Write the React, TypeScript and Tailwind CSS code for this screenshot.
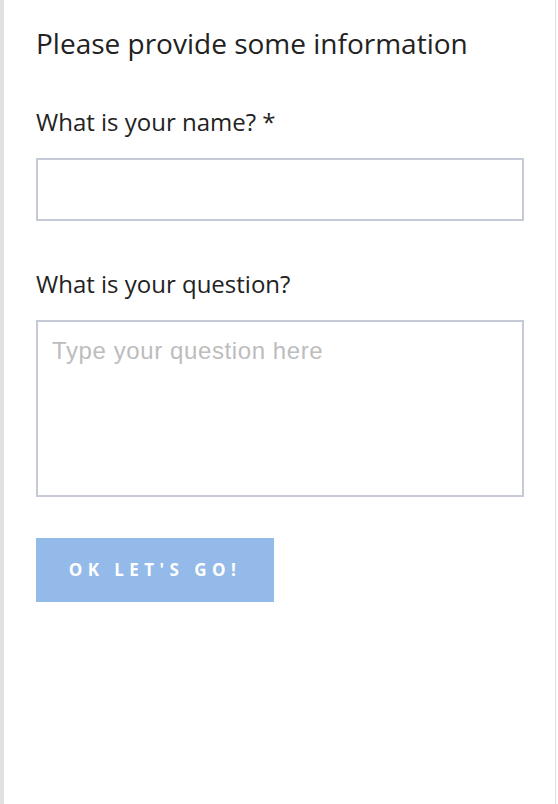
import React from "react";

export default function App() {
  return (
    <div className="flex min-h-[804px] w-[558px] bg-white">
      <div className="w-1 shrink-0 bg-[#e1e1e1]" />
      <div className="flex-1 pl-8 pr-[30px] pt-[23px]" style={{ fontFamily: '"Open Sans", sans-serif' }}>
        <h1 className="text-[28px] leading-[40px] text-[#222]">Please provide some information</h1>
        <label className="mt-[42px] block text-[24px] leading-[34px] text-[#222]">What is your name? *</label>
        <input
          type="text"
          className="mt-[19px] block h-[63px] w-[488px] border-2 border-[#c5cad6] bg-white outline-none"
        />
        <label className="mt-[46px] block text-[24px] leading-[34px] text-[#222]">What is your question?</label>
        <textarea
          placeholder="Type your question here"
          className="mt-[19px] block h-[177px] w-[488px] resize-none border-2 border-[#c5cad6] bg-white px-[14px] pt-[14px] text-[24px] leading-[30px] tracking-[0.6px] text-[#222] outline-none placeholder:text-[#bdbdbd]"
          style={{ fontFamily: '"Liberation Sans", Arial, sans-serif' }}
        />
        <button className="mt-[41px] flex h-[64px] w-[238px] items-center justify-center bg-[#93bae8] text-[17px] font-bold tracking-[0.32em] text-white">
          OK LET'S GO!
        </button>
      </div>
      <div className="w-px shrink-0 bg-[#e1e1e1]" />
      <div className="w-[2px] shrink-0 bg-white" />
    </div>
  );
}
